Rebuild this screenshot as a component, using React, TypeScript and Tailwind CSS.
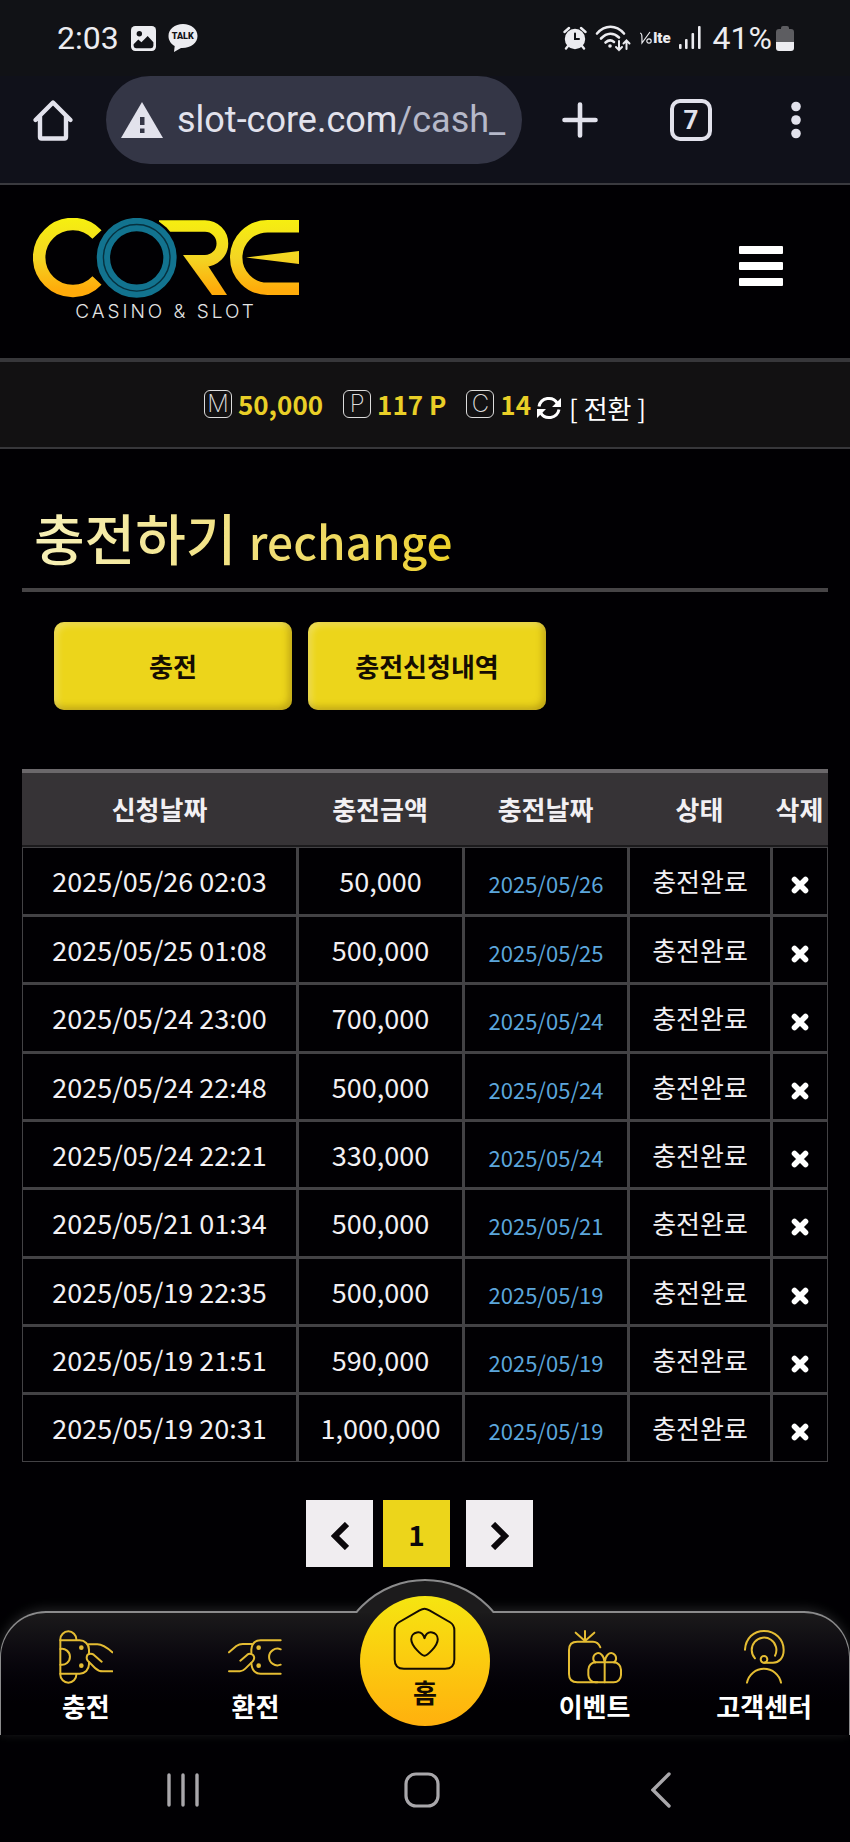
import type { ReactNode } from "react";

type Deposit = {
  requestedAt: string;
  amount: string;
  paidAt: string;
};

const deposits: Deposit[] = [
  { requestedAt: "2025/05/26 02:03", amount: "50,000", paidAt: "2025/05/26" },
  { requestedAt: "2025/05/25 01:08", amount: "500,000", paidAt: "2025/05/25" },
  { requestedAt: "2025/05/24 23:00", amount: "700,000", paidAt: "2025/05/24" },
  { requestedAt: "2025/05/24 22:48", amount: "500,000", paidAt: "2025/05/24" },
  { requestedAt: "2025/05/24 22:21", amount: "330,000", paidAt: "2025/05/24" },
  { requestedAt: "2025/05/21 01:34", amount: "500,000", paidAt: "2025/05/21" },
  { requestedAt: "2025/05/19 22:35", amount: "500,000", paidAt: "2025/05/19" },
  { requestedAt: "2025/05/19 21:51", amount: "590,000", paidAt: "2025/05/19" },
  { requestedAt: "2025/05/19 20:31", amount: "1,000,000", paidAt: "2025/05/19" },
];

const columns = ["신청날짜", "충전금액", "충전날짜", "상태", "삭제"];

const cell = "border border-[#434245] not-first:border-l-2";

function StatusBar() {
  return (
    <div className="flex h-[76px] items-center justify-between bg-[#111216] pr-[56px] pl-[57px] font-['Roboto',sans-serif] text-[32px] leading-[36px] text-[#ececf0]">
      <div className="flex items-center gap-3">
        <span>2:03</span>
        <svg viewBox="0 0 24 24" className="size-[25px]" aria-hidden="true">
          <rect width="24" height="24" rx="4" fill="#ececf0" />
          <circle cx="8" cy="7.5" r="2.6" fill="#111216" />
          <path d="M2.5 17.5 7 13l3 2.6 6-6 5.500 6V19a2.300 2.300 0 0 1-2.300 2.300H4.800A2.300 2.300 0 0 1 2.500 19z" fill="#111216" />
        </svg>
        <span className="relative flex h-[28px] w-[30px] justify-center">
          <svg viewBox="0 0 30 28" className="absolute inset-0" aria-hidden="true">
            <path d="M15 0C6.700 0 .5 5 .5 12c0 4.500 2.600 8 6.200 10L6 28l7-4c9.600.5 16.500-4.800 16.500-12C29.500 5 23.300 0 15 0z" fill="#ececf0" />
          </svg>
          <span className="relative text-[9px] leading-[24px] font-black text-[#111216]">TALK</span>
        </span>
      </div>

      <div className="flex items-center gap-2">
        <svg viewBox="0 0 24 24" className="size-[24px]" fill="none" stroke="#ececf0" strokeWidth="2.400" strokeLinecap="round" aria-hidden="true">
          <circle cx="12" cy="13" r="9" fill="#ececf0" />
          <path d="M1.500 6 6 2M22.500 6 18 2M5 20l-2 2.500M19 20l2 2.500" />
          <path d="M12 7.500V13h4" stroke="#111216" strokeWidth="2" />
        </svg>
        <svg viewBox="0 0 36 27" className="h-[27px] w-[36px]" fill="none" stroke="#ececf0" strokeWidth="2.600" strokeLinecap="round" aria-hidden="true">
          <path d="M2 8.500C10-.5 21-.5 29 8.500M6 13.500c6-6 12.500-6 18-1M10.500 17.500c3-2.600 6-2.600 8.500-.6" />
          <circle cx="15" cy="21" r="1.800" fill="#ececf0" stroke="none" />
          <path d="M24 16v9m-3-3 3 3 3-3M31.500 24v-8.500m-3 3 3-3 3 3" strokeWidth="2" />
        </svg>
        <span className="flex items-center text-[15px] leading-[20px] font-black">
          <svg viewBox="0 0 14 14" className="h-[14px] w-[14px]" fill="none" stroke="#ececf0" strokeWidth="1.200" aria-hidden="true">
            <path d="M1 2c2 0 2 2 2 10L11 1" />
            <circle cx="10" cy="10" r="2.200" />
          </svg>
          lte
        </span>
        <svg viewBox="0 0 22 24" className="h-[24px] w-[22px]" fill="#ececf0" aria-hidden="true">
          <rect x="0" y="18" width="2.600" height="5" rx="1" />
          <rect x="6" y="13" width="2.600" height="10" rx="1" />
          <rect x="12.500" y="7" width="2.600" height="16" rx="1" />
          <rect x="19" y="0" width="2.600" height="23" rx="1" />
        </svg>
        <div className="ml-1 flex items-center gap-1">
          <span>41%</span>
          <svg viewBox="0 0 18 25" className="h-[25px] w-[18px]" aria-hidden="true">
            <path d="M5 2a2 2 0 0 1 2-2h4a2 2 0 0 1 2 2v1h2a3 3 0 0 1 3 3v10H0V6a3 3 0 0 1 3-3h2z" fill="#5d5d61" />
            <path d="M0 16h18v6a3 3 0 0 1-3 3H3a3 3 0 0 1-3-3z" fill="#ececf0" />
          </svg>
        </div>
      </div>
    </div>
  );
}

function BrowserBar() {
  return (
    <div className="flex h-[109px] items-start border-b-2 border-[#3a3a3f] bg-[#10111a] pr-[42px] pl-[32px] font-['Roboto',sans-serif] text-[#e2e2ec]">
      <button type="button" aria-label="Home" className="flex h-[88px] w-[42px] items-center">
        <svg viewBox="0 0 42 42" className="size-[42px]" fill="none" stroke="currentColor" strokeWidth="4.400" strokeLinecap="round" strokeLinejoin="round" aria-hidden="true">
          <path d="M3.500 21 21 3.500 38.500 21M8 17v21q0 1.500 1.500 1.500h23Q34 39.500 34 38V17" />
        </svg>
      </button>
      <div className="ml-8 flex h-[88px] min-w-0 flex-1 items-center gap-[14px] rounded-full bg-[#343646] pl-[15px]">
        <svg viewBox="0 0 42 36" className="h-[36px] w-[42px] shrink-0" aria-hidden="true">
          <path d="M21 0 42 36H0z" fill="currentColor" />
          <path d="M19 15h4.500v8H19zM19 26.500h4.500V31H19z" fill="#343646" />
        </svg>
        <span className="text-[36px] leading-[48px] whitespace-nowrap">
          slot-core.com<span className="text-[#b6b9c9]">/cash_</span>
        </span>
      </div>
      <button type="button" aria-label="New tab" className="ml-[38px] flex h-[88px] w-[40px] items-center justify-center">
        <svg viewBox="0 0 36 36" className="size-[36px]" stroke="currentColor" strokeWidth="4.600" strokeLinecap="round" aria-hidden="true">
          <path d="M18 2.500v31M2.500 18h31" />
        </svg>
      </button>
      <button type="button" aria-label="Tabs" className="ml-[70px] flex h-[88px] w-[42px] items-center">
        <span className="flex size-[42px] items-center justify-center rounded-[10px] border-4 border-current text-[26px] leading-[30px] font-bold">7</span>
      </button>
      <button type="button" aria-label="Menu" className="ml-[72px] flex h-[88px] w-6 items-center justify-center">
        <svg viewBox="0 0 10 38" className="h-[38px] w-[10px]" fill="currentColor" aria-hidden="true">
          <circle cx="5" cy="5.500" r="4.800" />
          <circle cx="5" cy="19" r="4.800" />
          <circle cx="5" cy="32.500" r="4.800" />
        </svg>
      </button>
    </div>
  );
}

function Logo() {
  return (
    <a href="#" aria-label="CORE CASINO & SLOT" className="flex flex-col items-center">
      <svg viewBox="0 0 266 80" className="h-[80px] w-[266px]" fill="none" aria-hidden="true">
        <defs>
          <linearGradient id="gold" x1="0" y1="0" x2="0" y2="80" gradientUnits="userSpaceOnUse">
            <stop offset="0" stopColor="#f6f00f" />
            <stop offset=".5" stopColor="#f3d523" />
            <stop offset=".9" stopColor="#ffab0a" />
          </linearGradient>
        </defs>
        <path d="M64 16.500A33.500 33.500 0 1 0 64 62.500" stroke="url(#gold)" strokeWidth="12.500" />
        <path d="M126 8h46a17.400 17.400 0 0 1 0 34.800h-12" stroke="url(#gold)" strokeWidth="11.700" />
        <path d="M150 37h18l26 40h-15z" fill="url(#gold)" />
        <path d="M266 8.200h-31.500a31.300 31.300 0 0 0 0 62.600H266" stroke="url(#gold)" strokeWidth="12.400" />
        <path d="m213 39.500 53-6.500v13z" fill="url(#gold)" />
        <circle cx="103.700" cy="39.800" r="42.500" fill="#010003" />
        <circle cx="103.700" cy="39.800" r="33.300" stroke="#12738f" strokeWidth="13.300" />
        <circle cx="103.700" cy="39.800" r="33.300" stroke="#06313f" strokeWidth="1.400" />
      </svg>
      <span className="mt-0.5 font-['Inter',sans-serif] text-[19px] leading-[24px] font-light tracking-[3px] text-[#e4e4e4]">
        CASINO &amp; SLOT
      </span>
    </a>
  );
}

function SiteHeader() {
  return (
    <header className="flex h-[173px] items-start justify-between pt-[33px] pr-[67px] pl-[33px]">
      <Logo />
      <button type="button" aria-label="메뉴" className="flex flex-col gap-2 pt-7">
        <span className="h-2 w-11 rounded-[1px] bg-white" />
        <span className="h-2 w-11 rounded-[1px] bg-white" />
        <span className="h-2 w-11 rounded-[1px] bg-white" />
      </button>
    </header>
  );
}

function Balance({ letter, value }: { letter: string; value: string }) {
  return (
    <span className="flex items-center gap-[6px]">
      <span className="flex size-[28px] items-center justify-center rounded-[6px] border border-[#dcdcdc] font-['Inter',sans-serif] text-[24px] leading-[26px] font-extralight text-[#dcdcdc]">
        {letter}
      </span>
      <span className="font-bold text-[#e9cf27]">{value}</span>
    </span>
  );
}

function BalanceBar() {
  return (
    <div className="flex h-[91px] items-center justify-center border-t-4 border-b-2 border-[#37373a] bg-[#121112] pb-0.5 text-[26px] leading-[36px]">
      <div className="flex items-center gap-5">
        <Balance letter="M" value="50,000" />
        <Balance letter="P" value="117 P" />
        <Balance letter="C" value="14" />
      </div>
      <button type="button" className="mt-2 ml-[6px] flex items-center gap-2 text-white">
        <svg viewBox="0 0 24 24" className="size-[24px]" fill="none" stroke="currentColor" strokeWidth="3" aria-hidden="true">
          <path d="M2 10.500a10 10 0 0 1 18.500-3M22 13.500a10 10 0 0 1-18.500 3" />
          <path d="M24 2v9h-9zM0 22v-9h9z" fill="currentColor" stroke="none" />
        </svg>
        <span>[ 전환 ]</span>
      </button>
    </div>
  );
}

function DepositTable() {
  return (
    <table className="mt-[59px] w-full table-fixed border-separate border-spacing-0 text-center text-[26px] leading-[36px]">
      <colgroup>
        <col className="w-[275px]" />
        <col className="w-[166px]" />
        <col className="w-[165px]" />
        <col className="w-[143px]" />
        <col className="w-[57px]" />
      </colgroup>
      <thead>
        <tr className="h-[78px]">
          {columns.map((column) => (
            <th
              key={column}
              scope="col"
              className="border-t-4 border-b-2 border-t-[#6b686b] border-b-[#1b1a1c] bg-[#363336] font-bold whitespace-nowrap"
            >
              {column}
            </th>
          ))}
        </tr>
      </thead>
      <tbody>
        {deposits.map((deposit) => (
          <tr key={deposit.requestedAt} className="h-[68px] nth-[3n]:h-[69px] [&:not(:first-child)>td]:border-t-2">
            <td className={`${cell} text-[27px]`}>{deposit.requestedAt}</td>
            <td className={`${cell} text-[27px]`}>{deposit.amount}</td>
            <td className={`${cell} pt-1 text-[22px] text-[#5ca6dc]`}>{deposit.paidAt}</td>
            <td className={cell}>충전완료</td>
            <td className={cell}>
              <button type="button" aria-label="삭제" className="block w-full pt-2">
                <svg viewBox="0 0 18 18" className="mx-auto size-[18px]" stroke="white" strokeWidth="5.600" strokeLinecap="round" aria-hidden="true">
                  <path d="m3.500 3.500 11 11M14.500 3.500l-11 11" />
                </svg>
              </button>
            </td>
          </tr>
        ))}
      </tbody>
    </table>
  );
}

function Pagination() {
  return (
    <nav aria-label="페이지" className="mt-[38px] flex justify-center pr-[11px] text-[28px] leading-[36px] font-bold text-[#0b080b]">
      <button type="button" aria-label="이전" className="flex size-[67px] items-center justify-center bg-[#f0edf0] pt-1">
        <svg viewBox="0 0 18 28" className="h-[28px] w-[18px]" fill="none" stroke="currentColor" strokeWidth="6" aria-hidden="true">
          <path d="M16 2 4 14l12 12" />
        </svg>
      </button>
      <button type="button" aria-current="page" className="ml-[10px] size-[67px] bg-[#ecd51b]">
        1
      </button>
      <button type="button" aria-label="다음" className="ml-4 flex size-[67px] items-center justify-center bg-[#f0edf0] pt-1">
        <svg viewBox="0 0 18 28" className="h-[28px] w-[18px]" fill="none" stroke="currentColor" strokeWidth="6" aria-hidden="true">
          <path d="m2 2 12 12L2 26" />
        </svg>
      </button>
    </nav>
  );
}

function LineIcon({ children }: { children: ReactNode }) {
  return (
    <svg viewBox="0 0 162 162" className="size-[54px]" fill="none" stroke="#e5bd33" strokeWidth="6" strokeLinecap="round" strokeLinejoin="round" aria-hidden="true">
      {children}
    </svg>
  );
}

function NavItem({ label, children }: { label: string; children: ReactNode }) {
  return (
    <a href="#" className="flex flex-col items-center gap-1 pt-[17px]">
      <LineIcon>{children}</LineIcon>
      <span>{label}</span>
    </a>
  );
}

function BottomNav() {
  return (
    <nav aria-label="메인" className="relative mt-[44px] grid h-[124px] grid-cols-5 rounded-t-[46px] border-x border-t-2 border-[#8b8b8c] bg-linear-to-b from-[#1b1a1b] to-[#010003] to-75% text-[26px] leading-[36px] font-bold text-white shadow-[0_-2px_12px_rgba(255,255,255,0.14)]">
      <NavItem label="충전">
        <path d="M4 28a24 24 0 0 1 48 0M4 134a24 24 0 0 0 48 0M4 28v106" />
        <path d="M4 31h58a28 28 0 0 1 28 28v12M90 97v6a28 28 0 0 1-28 28H4M4 57a24 24 0 1 1 0 47" />
        <path d="M88 43h27q18 0 45 24M128 95l-24-21q-8-6-18 0-6 9 0 18l22 22q10 10 24 10h28" />
        <circle cx="67" cy="53" r="4" fill="#e5bd33" />
        <circle cx="67" cy="107" r="4" fill="#e5bd33" />
      </NavItem>
      <NavItem label="환전">
        <path d="M158 31H98q-26 0-28 28v12M70 99q2 32 28 32h60M158 58a25 25 0 1 0 0 46" />
        <path d="M3 67l22-19q9-6 19-6h28M37 92l21-18q8-6 18 2 6 8-2 18l-22 22q-8 8-16 8H3" />
        <circle cx="92" cy="53" r="4" fill="#e5bd33" />
        <circle cx="92" cy="107" r="4" fill="#e5bd33" />
      </NavItem>
      <a href="#" className="relative z-10 -mt-[17px] flex size-[130px] flex-col items-center justify-self-center rounded-full bg-linear-to-b from-[#f5e511] to-[#ffb00d] pt-[11px] text-[#140c02]">
        <svg viewBox="0 0 190 190" className="size-[63px] shrink-0" fill="none" stroke="currentColor" strokeWidth="6" strokeLinejoin="round" aria-hidden="true">
          <path d="M95 5q6 0 15 5l62 36q13 8 13 24v88q0 28-28 28H33q-28 0-28-28V70q0-16 13-24l62-36q9-5 15-5z" />
          <path d="M95 147c-7 0-40-29-40-50 0-22 32-31 40-3 8-28 40-19 40 3 0 21-33 50-40 50z" />
        </svg>
        <span className="mt-1">홈</span>
      </a>
      <NavItem label="이벤트">
        <path d="M51 33 23 8M51 33V3M51 33 79 8" />
        <path d="M97 52q-7-17-22-17H28Q3 35 3 60v72q0 25 25 25h60" />
        <rect x="61" y="97" width="98" height="60" rx="22" />
        <path d="M110 157V97c-2-22-14-30-24-27-14 6-12 22-4 27M110 97c2-22 14-30 24-27 14 6 12 22 4 27" />
      </NavItem>
      <NavItem label="고객센터">
        <path d="M24 59C26 25 50 3 81 3c34 0 59 25 59 57 0 25-15 38-32 38H81" />
        <path d="M54 85a37 37 0 1 1 60-8M30 158a52 52 0 0 1 102 0" />
        <circle cx="81" cy="88" r="10" />
      </NavItem>
      {/* raised rim behind the home button */}
      <span className="pointer-events-none absolute -top-[34px] left-1/2 h-[34px] w-[180px] -translate-x-1/2 overflow-hidden">
        <span className="block size-[180px] rounded-full border-2 border-[#8b8b8c] bg-[#1c1b1c]" />
      </span>
    </nav>
  );
}

function SystemNav() {
  return (
    <div className="grid h-[107px] grid-cols-3 items-center justify-items-center pt-[3px] pr-[70px] pl-[64px] text-[#a9a7ab]">
      <button type="button" aria-label="Recents">
        <svg viewBox="0 0 32 34" className="h-[34px] w-[32px]" stroke="currentColor" strokeWidth="3.400" strokeLinecap="round" aria-hidden="true">
          <path d="M2 2v30M16 2v30M30 2v30" />
        </svg>
      </button>
      <button type="button" aria-label="Home">
        <svg viewBox="0 0 36 36" className="size-[36px]" fill="none" stroke="currentColor" strokeWidth="3.200" aria-hidden="true">
          <rect x="2" y="2" width="32" height="32" rx="10" />
        </svg>
      </button>
      <button type="button" aria-label="Back">
        <svg viewBox="0 0 20 36" className="h-[36px] w-[20px]" fill="none" stroke="currentColor" strokeWidth="3.400" strokeLinecap="round" aria-hidden="true">
          <path d="M18 2 2 18l16 16" />
        </svg>
      </button>
    </div>
  );
}

export default function App() {
  return (
    <div className="bg-[#010003] font-['Noto_Sans_CJK_KR',sans-serif] text-[#f2f0f3]">
      <StatusBar />
      <BrowserBar />
      <SiteHeader />
      <BalanceBar />
      <main className="px-[22px]">
        <h1 className="border-b-4 border-[#464446] px-3 pt-[52px] pb-[17px] text-[55px] leading-[70px] font-medium">
          <span className="bg-linear-to-r from-[#f7f0b8] to-[#ecd026] bg-clip-text text-transparent">
            충전하기 <span className="text-[46px] leading-none">rechange</span>
          </span>
        </h1>
        <div className="flex gap-4 px-8 pt-[30px] text-[26px] leading-[36px] font-bold text-[#150d02]">
          <button type="button" className="h-[88px] w-[238px] rounded-[10px] bg-[#ecd51b] shadow-[inset_-3px_-3px_7px_rgba(120,90,0,0.4),inset_3px_3px_7px_rgba(255,255,255,0.3)]">
            충전
          </button>
          <button type="button" className="h-[88px] w-[238px] rounded-[10px] bg-[#ecd51b] shadow-[inset_-3px_-3px_7px_rgba(120,90,0,0.4),inset_3px_3px_7px_rgba(255,255,255,0.3)]">
            충전신청내역
          </button>
        </div>
        <DepositTable />
        <Pagination />
      </main>
      <BottomNav />
      <SystemNav />
    </div>
  );
}
